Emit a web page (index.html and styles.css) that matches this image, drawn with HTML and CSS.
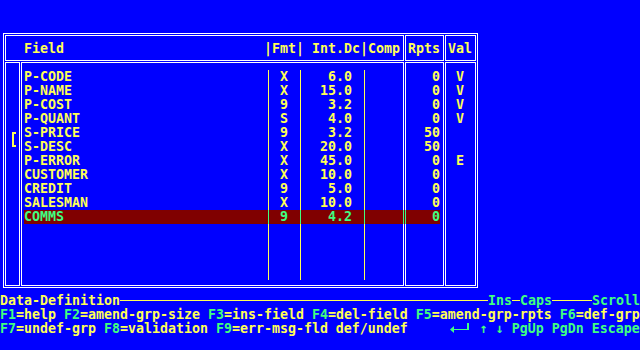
FILE: index.html
```html
<!DOCTYPE html>
<html lang="en">
<head>
    <meta charset="UTF-8">
    <meta name="viewport" content="width=device-width, initial-scale=1.0">
    <title>Data Definition</title>
    <link rel="stylesheet" href="styles.css">
</head>
<body>
    <div class="screen">
        <div class="frame">
            <div class="region head-main"><span class="col-name">Field</span><span class="col-rest">|Fmt| Int.Dc|Comp</span></div>
            <div class="region head-rpts">Rpts</div>
            <div class="region head-val">Val</div>

            <div class="region body-mark"><span class="bracket"></span></div>
            <div class="region body-main" id="mainRows"></div>
            <div class="region body-rpts" id="rptsRows"></div>
            <div class="region body-val" id="valRows"></div>

            <!-- selection bar runs across the Rpts divider -->
            <div class="select-bar" id="selectBar"></div>
        </div>

        <div class="status">
            <span>Data-Definition</span><span class="rule"></span><span class="flag">Ins</span><span class="rule dash"></span><span class="flag">Caps</span><span class="rule gap"></span><span class="flag">Scroll</span>
        </div>
        <div class="keys"><span class="key">F1</span>=help <span class="key">F2</span>=amend-grp-size <span class="key">F3</span>=ins-field <span class="key">F4</span>=del-field <span class="key">F5</span>=amend-grp-rpts <span class="key">F6</span>=def-grp</div>
        <div class="keys"><span class="key">F7</span>=undef-grp <span class="key">F8</span>=validation <span class="key">F9</span>=err-msg-fld def/undef     <span class="key"><svg class="enter" width="24" height="14" viewBox="0 0 24 14"><polygon points="2,7.5 6,4 6,11"/><rect x="6" y="7" width="14" height="1"/><rect x="19" y="1" width="2" height="7"/></svg> ↑ ↓ PgUp PgDn Escape</span></div>
    </div>

    <script>
        document.addEventListener("DOMContentLoaded", function() {
            const mainRows = document.getElementById("mainRows");
            const rptsRows = document.getElementById("rptsRows");
            const valRows = document.getElementById("valRows");
            const selectBar = document.getElementById("selectBar");

            const fields = [
                { name: "P-CODE", fmt: "X", size: "6.0", rpts: "0", val: "V" },
                { name: "P-NAME", fmt: "X", size: "15.0", rpts: "0", val: "V" },
                { name: "P-COST", fmt: "9", size: "3.2", rpts: "0", val: "V" },
                { name: "P-QUANT", fmt: "S", size: "4.0", rpts: "0", val: "V" },
                { name: "S-PRICE", fmt: "9", size: "3.2", rpts: "50", val: "" },
                { name: "S-DESC", fmt: "X", size: "20.0", rpts: "50", val: "" },
                { name: "P-ERROR", fmt: "X", size: "45.0", rpts: "0", val: "E" },
                { name: "CUSTOMER", fmt: "X", size: "10.0", rpts: "0", val: "" },
                { name: "CREDIT", fmt: "9", size: "5.0", rpts: "0", val: "" },
                { name: "SALESMAN", fmt: "X", size: "10.0", rpts: "0", val: "" },
                { name: "COMMS", fmt: "9", size: "4.2", rpts: "0", val: "", selected: true }
            ];
            const rowCount = 15;

            function mainCells(f) {
                return `
                    <span class="cell-name">${f.name}</span>
                    <span class="cell-fmt">${f.fmt}</span>
                    <span class="cell-size">${f.size}</span>
                    <span class="cell-comp"></span>
                `;
            }

            for (let i = 0; i < rowCount; i++) {
                let f = fields[i];
                if (f && f.selected) {
                    selectBar.style.top = (36 + i * 14) + "px";
                    selectBar.innerHTML = mainCells(f) +
                        `<span class="cell-div"></span><span class="cell-rpts">${f.rpts}</span>`;
                    f = null;
                }
                if (!f) f = { name: "", fmt: "", size: "", rpts: "", val: "" };

                const row = document.createElement("div");
                row.classList.add("row");
                row.innerHTML = mainCells(f);
                mainRows.appendChild(row);

                const rpts = document.createElement("div");
                rpts.classList.add("row");
                rpts.textContent = f.rpts;
                rptsRows.appendChild(rpts);

                const val = document.createElement("div");
                val.classList.add("row");
                val.textContent = f.val;
                valRows.appendChild(val);
            }
        });
    </script>
</body>
</html>
```

FILE: styles.css
```css
body {
    margin: 0;
    padding: 0;
    background-color: #0000ff;
}
.screen {
    width: 640px;
    height: 350px;
    overflow: hidden;
    background-color: #0000ff;
    color: #ffff55;
    font-family: 'DejaVu Sans Mono', 'Liberation Mono', monospace;
    font-weight: bold;
    font-size: 13.29px;
    line-height: 14px;
}
.frame {
    position: relative;
    box-sizing: border-box;
    width: 475px;
    height: 255px;
    margin: 33px 0 0 3px;
    padding: 1px;
    border: 1px solid #fff;
    display: grid;
    grid-template-columns: 15px 383px 39px 31px;
    grid-template-rows: 26px 224px;
    gap: 1px;
}
.region {
    box-sizing: border-box;
    border: 1px solid #fff;
    padding-top: 6px;
}
.head-main {
    grid-column: 1 / 3;
    display: flex;
    padding-left: 18px;
}
.head-main .col-name {
    width: 240px;
    flex: none;
}
.head-main .col-rest {
    white-space: pre;
}
.head-rpts, .head-val {
    padding-left: 2px;
}
.body-mark {
    padding-top: 0;
}
.bracket {
    display: block;
    width: 2px;
    height: 11px;
    margin: 69px 0 0 6px;
    border: 2px solid #ffff55;
    border-right: none;
}
.body-main, .body-rpts, .body-val {
    padding-top: 7px;
}
.body-main {
    padding-left: 2px;
}
.body-rpts {
    padding-right: 3px;
    text-align: right;
}
.body-val {
    padding-left: 10px;
}
.row {
    height: 14px;
    display: flex;
}
.body-rpts .row, .body-val .row {
    display: block;
}
.cell-name {
    width: 244px;
    flex: none;
}
.cell-fmt, .cell-size, .cell-comp {
    box-sizing: border-box;
    border-left: 1px solid currentColor;
}
.cell-fmt {
    width: 32px;
    flex: none;
    padding-left: 11px;
}
.cell-size {
    width: 64px;
    flex: none;
    padding-right: 12px;
    text-align: right;
}
.cell-comp {
    flex: 1;
}
.select-bar {
    position: absolute;
    left: 20px;
    top: 176px;
    width: 416px;
    height: 14px;
    display: flex;
    background-color: #800000;
    color: #40ff80;
}
.select-bar .cell-comp {
    width: 36px;
    flex: none;
}
.cell-div {
    width: 1px;
    margin: 0 2px 0 3px;
    border-left: 1px solid currentColor;
    border-right: 1px solid currentColor;
}
.cell-rpts {
    width: 32px;
    text-align: right;
}
.status {
    display: flex;
    height: 14px;
    margin-top: 6px;
}
.rule {
    flex: 1;
    height: 1px;
    margin-top: 6px;
    background-color: #ffff55;
}
.rule.dash {
    flex: none;
    width: 8px;
}
.rule.gap {
    flex: none;
    width: 40px;
}
.flag, .key {
    color: #40ff80;
}
.keys {
    height: 14px;
    white-space: pre;
}
.enter {
    vertical-align: top;
    fill: #40ff80;
}
```
